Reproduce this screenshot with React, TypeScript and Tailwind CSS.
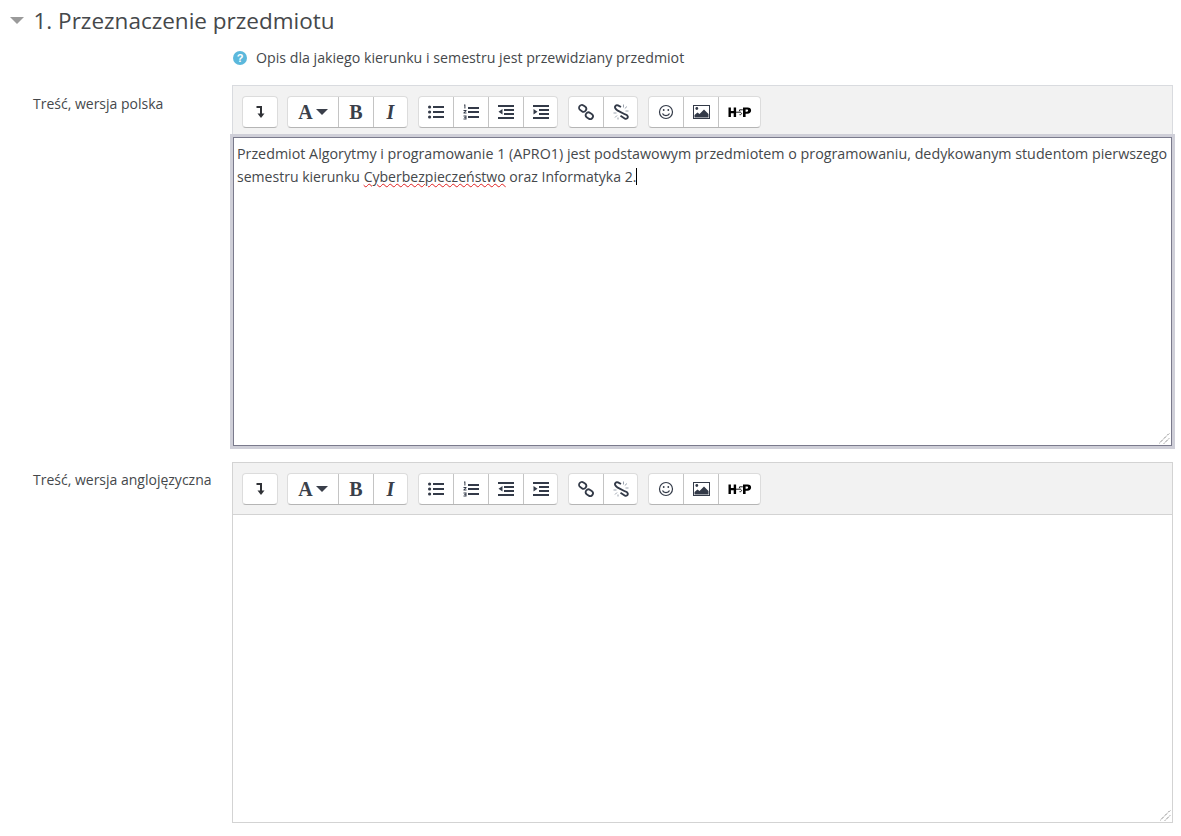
import React from "react";

function Undo() {
  return (
    <svg width="16" height="18" viewBox="0 0 16 18">
      <path d="M4.500 4h4.500v8" fill="none" stroke="#2f3136" strokeWidth="2" />
      <path d="M5.500 10.500h7l-3.500 4.500z" fill="#2f3136" />
    </svg>
  );
}
function Bullet() {
  return (
    <svg width="16" height="16" viewBox="0 0 16 16" fill="#333a48">
      <circle cx="1.600" cy="3" r="1.600" />
      <circle cx="1.600" cy="8" r="1.600" />
      <circle cx="1.600" cy="13" r="1.600" />
      <rect x="5" y="2" width="11" height="2" />
      <rect x="5" y="7" width="11" height="2" />
      <rect x="5" y="12" width="11" height="2" />
    </svg>
  );
}
function Numbered() {
  return (
    <svg width="16" height="16" viewBox="0 0 16 16" fill="#333a48">
      <rect x="5" y="3" width="11" height="2" />
      <rect x="5" y="7" width="11" height="2" />
      <rect x="5" y="12" width="11" height="2" />
      <path d="M1 0.500h1.400V4.500H1.400V1.500H1zM0.500 6h3v1L1.800 8.500h1.700v1h-3v-1L2.200 7H.5zM.5 11.500h3v4h-3v-1h2v-.5h-1.400v-.8h1.400v-.7h-2z" />
    </svg>
  );
}
function Outdent() {
  return (
    <svg width="16" height="16" viewBox="0 0 16 16" fill="#333a48">
      <rect x="0" y="1" width="16" height="2" />
      <rect x="6" y="5" width="10" height="2" />
      <rect x="6" y="9" width="10" height="2" />
      <rect x="0" y="13" width="16" height="2" />
      <path d="M4.500 5v5.500L0.500 7.800z" />
    </svg>
  );
}
function Indent() {
  return (
    <svg width="16" height="16" viewBox="0 0 16 16" fill="#333a48">
      <rect x="0" y="1" width="16" height="2" />
      <rect x="6" y="5" width="10" height="2" />
      <rect x="6" y="9" width="10" height="2" />
      <rect x="0" y="13" width="16" height="2" />
      <path d="M0.500 5v5.500L4.500 7.800z" />
    </svg>
  );
}
function LinkIcon() {
  return (
    <svg width="16" height="16" viewBox="0 0 16 16" fill="none" stroke="#333a48" strokeWidth="1.800">
      <rect x="0.900" y="1.500" width="7.500" height="5.600" rx="2.800" transform="rotate(35 4.600 4.300)" />
      <rect x="7.600" y="8.900" width="7.500" height="5.600" rx="2.800" transform="rotate(35 11.300 11.700)" />
    </svg>
  );
}
function Unlink() {
  return (
    <svg width="16" height="16" viewBox="0 0 16 16" fill="none" stroke="#333a48" strokeWidth="1.900">
      <path d="M8 3 5 1.400C3 .6 1.300 2.400 2.300 4.300 2.800 5.300 3.800 6 4.800 6.700L11.300 10C12.500 10.600 14.200 10.800 14.700 12.200 15.200 14 13.500 15.400 12 14.700L7.500 11.800" />
      <path d="M10.500 .5v3M14 2.500l-2.200 2M15.500 7h-3M.5 9h3M2 13.500l2-2M5 15.500v-2" stroke="#9aa2ad" strokeWidth="1" />
    </svg>
  );
}
function Smile() {
  return (
    <svg width="16" height="16" viewBox="0 0 16 16" fill="none" stroke="#333a48" strokeWidth="1.200">
      <circle cx="8" cy="8" r="6.500" />
      <circle cx="5.700" cy="6" r="0.900" fill="#333a48" stroke="none" />
      <circle cx="10.300" cy="6" r="0.900" fill="#333a48" stroke="none" />
      <path d="M4.500 9.500C5.500 12.200 10.500 12.200 11.500 9.500" />
    </svg>
  );
}
function Picture() {
  return (
    <svg width="17" height="16" viewBox="0 0 17 16">
      <rect x="0.500" y="1.500" width="16" height="13" fill="#fff" stroke="#333a48" />
      <path d="M1.500 13.500V11l3-2.500 2 1.500L11 5.500l4.500 4.500v3.500z" fill="#333a48" />
      <circle cx="3.800" cy="4.500" r="1.400" fill="#333a48" />
    </svg>
  );
}
function H5p() {
  return (
    <svg width="24" height="12" viewBox="0 0 24 12">
      <path d="M0.500 1.500h2.400v3.500h2.800V1.500h2.400v9.500H5.700V7.200H2.900V11H.5zM15 1.500h4.600c2.300 0 3.500 1.200 3.500 3 0 2-1.400 3.200-3.700 3.200h-1.800V11H15zM17.600 3.500v2.200h1.300c.8 0 1.200-.4 1.200-1.100s-.4-1.100-1.200-1.100z" fill="#000" />
      <path d="M8 6.200h5M14.800 3.800h-3.200l-.3 1.500M13.500 6.800c.4 1.200-.6 2.200-2 1.900" fill="none" stroke="#000" strokeWidth="0.900" />
    </svg>
  );
}
function Grip() {
  return (
    <svg className="absolute bottom-[1px] right-[1px]" width="11" height="11" viewBox="0 0 11 11">
      <path d="M0 10.500 10.500 0M5 10.500 10.500 5" stroke="#555" strokeWidth="1" strokeDasharray="1 1" fill="none" />
    </svg>
  );
}

function Cell({ children, w = "w-[35px]", last = false }: { children: React.ReactNode; w?: string; last?: boolean }) {
  return (
    <div className={`flex h-full items-center justify-center ${w} ${last ? "" : "border-r border-[#c4c4c4]"}`}>
      {children}
    </div>
  );
}
function Group({ children, className = "" }: { children: React.ReactNode; className?: string }) {
  return (
    <div className={`flex h-[32px] items-center rounded-[4px] border border-[#dcdcdc] border-b-[#b5b5b5] bg-white ${className}`}>
      {children}
    </div>
  );
}
function Toolbar() {
  return (
    <div className="flex h-[51px] items-start gap-[10px] bg-[#f2f2f2] pl-[9px] pt-[9.500px]">
      <Group className="mr-[-1px]">
        <Cell last w="w-[34px]"><Undo /></Cell>
      </Group>
      <Group>
        <Cell w="w-[51px]">
          <span className="font-['Liberation_Serif',serif] text-[20px] font-bold text-[#3a3f4a]">A</span>
          <span className="ml-[3px] h-0 w-0 border-x-[6px] border-t-[6px] border-x-transparent border-t-[#3a3f4a]" />
        </Cell>
        <Cell><span className="font-['Liberation_Serif',serif] text-[20px] font-bold text-[#3a3f4a]">B</span></Cell>
        <Cell last w="w-[33px]"><span className="font-['Liberation_Serif',serif] text-[20px] font-bold italic text-[#3a3f4a]">I</span></Cell>
      </Group>
      <Group>
        <Cell><Bullet /></Cell>
        <Cell><Numbered /></Cell>
        <Cell><Outdent /></Cell>
        <Cell last w="w-[33px]"><Indent /></Cell>
      </Group>
      <Group>
        <Cell><LinkIcon /></Cell>
        <Cell last w="w-[33px]"><Unlink /></Cell>
      </Group>
      <Group>
        <Cell><Smile /></Cell>
        <Cell><Picture /></Cell>
        <Cell last w="w-[41px]"><H5p /></Cell>
      </Group>
    </div>
  );
}

function Row({ label, children, labelClass = "" }: { label: string; children: React.ReactNode; labelClass?: string }) {
  return (
    <div className="flex">
      <div className={`w-[232px] shrink-0 pl-[33px] ${labelClass}`}>{label}</div>
      <div className="w-[941px] shrink-0">{children}</div>
    </div>
  );
}

export default function App() {
  return (
    <div className="h-[836px] w-[1181px] overflow-hidden bg-white font-['Open_Sans','Noto_Sans',sans-serif] text-[14px] leading-[24px] text-[#45484b]">
      <div className="flex h-[46px] items-center pb-[5px] pl-[10px]">
        <span className="mb-[1px] h-0 w-0 border-x-[7px] border-t-[7px] border-x-transparent border-t-[#9a9a9a]" />
        <h3 className="ml-[9.500px] text-[22.500px] leading-[32px]">1. Przeznaczenie przedmiotu</h3>
      </div>
      <div className="flex h-[24px] items-center pl-[233px]">
        <svg width="14" height="14" viewBox="0 0 14 14">
          <circle cx="7" cy="7" r="7" fill="#5bb8dc" />
          <text x="7" y="11" textAnchor="middle" fontSize="11" fontWeight="700" fill="#fff" fontFamily="Liberation Sans, sans-serif">?</text>
        </svg>
        <span className="ml-[9px] text-[14.200px]">Opis dla jakiego kierunku i semestru jest przewidziany przedmiot</span>
      </div>
      <div className="mt-[3px]">
        <Row label="Treść, wersja polska" labelClass="pt-[19px]">
          <div className="mt-[12px] border border-b-0 border-[#d9dbdf]">
            <Toolbar />
            <div className="relative h-[309px] border border-[#7a7a8c] bg-white px-[3px] py-[5px] text-[14.050px] leading-[22px] outline-[3px] outline-[#cfcfd8]">
              <p>
                <span className="text-[14.290px]">Przedmiot Algorytmy i programowanie 1 (APRO1) jest podstawowym przedmiotem o programowaniu, dedykowanym studentom pierwszego</span>{" "}
                semestru kierunku{" "}
                <span className="underline decoration-wavy decoration-[#e02020] decoration-1 underline-offset-1">Cyberbezpieczeństwo</span> oraz Informatyka 2.
                <span className="inline-block h-[17px] w-px translate-y-[3px] bg-black" />
              </p>
              <Grip />
            </div>
          </div>
        </Row>
      </div>
      <div className="mt-[16px]">
        <Row label="Treść, wersja anglojęzyczna" labelClass="pt-[6px]">
          <div className="border border-[#d3d3d3]">
            <Toolbar />
            <div className="relative h-[308px] border-t border-[#d3d3d3] bg-white">
              <Grip />
            </div>
          </div>
        </Row>
      </div>
    </div>
  );
}
